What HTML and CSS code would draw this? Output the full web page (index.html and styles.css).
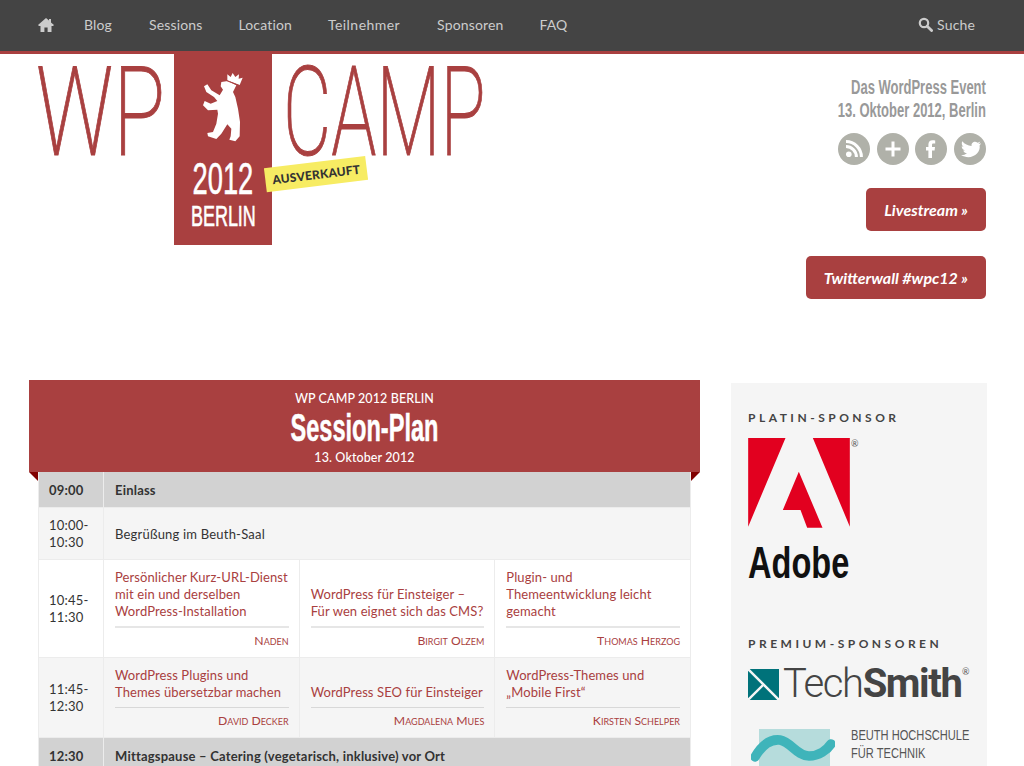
FILE: index.html
```html
<!DOCTYPE html>
<html>
<head>
    <title>WP Camp 2012 Berlin</title>
    <meta charset="UTF-8">
    <link rel="stylesheet" href="styles.css">
</head>
<body>
    <nav class="topnav">
        <a class="home" href="#"><svg width="16" height="14" viewBox="0 0 16 14"><path d="M8 0 L11 2.6 V1 H13 V4.4 L16 7 L15 8 H13.5 V14 H9.6 V9.5 H6.4 V14 H2.5 V8 H1 L0 7 Z" fill="#ccc"/></svg></a>
        <a class="nav-blog" href="#">Blog</a>
        <a href="#">Sessions</a>
        <a href="#">Location</a>
        <a class="nav-wide" href="#">Teilnehmer</a>
        <a href="#">Sponsoren</a>
        <a href="#">FAQ</a>
        <a class="search" href="#"><svg width="15" height="15" viewBox="0 0 15 15"><circle cx="6" cy="6" r="4.2" fill="none" stroke="#ccc" stroke-width="2.2"/><path d="M9.2 9.2 L13.6 13.6" stroke="#ccc" stroke-width="2.8" stroke-linecap="round"/></svg>Suche</a>
    </nav>

    <header class="masthead">
        <div class="logo">
            <span class="logo-word logo-wp"><span>WP</span></span>
            <div class="banner">
                <svg class="bear" width="40" height="70" viewBox="95 65 120 210">
                    <path d="M150 95 L170 92 L195 105 L185 125 L192 140 L200 175 L206 215 L205 258 L192 273 L174 268 L178 258 L180 235 L168 222 L150 250 L135 266 L110 258 L108 248 L125 245 L135 220 L140 190 L138 178 L110 180 L95 165 L100 152 L118 160 L138 152 L128 140 L105 125 L98 108 L108 102 L120 120 L145 135 L155 118 L148 108 Z" fill="#fff"/>
                    <path d="M168 90 L168 72 L178 80 L184 68 L192 80 L203 72 L202 85 L214 82 L205 104 Z" fill="#fff"/>
                    <path d="M166 91 L204 106" stroke="#a94040" stroke-width="3"/>
                </svg>
                <div class="banner-year"><span>2012</span></div>
                <div class="banner-city"><span>BERLIN</span></div>
            </div>
            <span class="logo-word logo-camp"><span>CAMP</span></span>
            <span class="soldout">AUSVERKAUFT</span>
        </div>
        <div class="event">
            <p class="tagline"><span>Das WordPress Event</span><span>13. Oktober 2012, Berlin</span></p>
            <div class="social">
                <a href="#"><svg width="32" height="32" viewBox="0 0 32 32"><circle cx="16" cy="16" r="16" fill="#b0b1a9"/><circle cx="10.8" cy="21.2" r="2.8" fill="#fff"/><path d="M8 13.6 A10.4 10.4 0 0 1 18.4 24 M8 8.6 A15.4 15.4 0 0 1 23.4 24" fill="none" stroke="#fff" stroke-width="3"/></svg></a>
                <a href="#"><svg width="32" height="32" viewBox="0 0 32 32"><circle cx="16" cy="16" r="16" fill="#b0b1a9"/><path d="M16 8.5 V23.5 M8.5 16 H23.5" stroke="#fff" stroke-width="3"/></svg></a>
                <a href="#"><svg width="32" height="32" viewBox="0 0 32 32"><circle cx="16" cy="16" r="16" fill="#b0b1a9"/><path d="M13.4 25 V17.4 H11 V14 H13.4 V11.6 C13.4 8.6 15 7.2 17.6 7.2 C18.8 7.2 19.8 7.3 20.2 7.4 V10.4 H18.4 C17.2 10.4 17 11 17 11.9 V14 H20 L19.6 17.4 H17 V25 Z" fill="#fff"/></svg></a>
                <a href="#"><svg width="32" height="32" viewBox="0 0 32 32"><circle cx="16" cy="16" r="16" fill="#b0b1a9"/><path d="M27 10.2 C26.1 10.7 25.3 10.9 24.4 11 C25.3 10.4 26 9.6 26.3 8.6 C25.5 9.1 24.5 9.5 23.5 9.7 C21.1 7.3 16.9 9.3 17.6 12.9 C14 12.7 10.6 11 8.3 8.2 C7.2 10.2 7.8 12.6 9.6 13.8 C8.9 13.8 8.3 13.6 7.7 13.3 C7.7 15.3 9.1 17 11 17.4 C10.4 17.6 9.8 17.6 9.2 17.5 C9.7 19.1 11.2 20.3 13 20.3 C11.2 21.7 9 22.3 6.8 22.1 C17.5 28 27 20 25.6 12.5 C26.1 11.7 26.6 11 27 10.2 Z" fill="#fff"/></svg></a>
            </div>
            <a class="btn btn-live" href="#">Livestream »</a>
            <a class="btn btn-wall" href="#">Twitterwall #wpc12 »</a>
        </div>
    </header>

    <div class="content">
        <main class="schedule">
            <div class="ribbon">
                <div class="ribbon-over">WP CAMP 2012 BERLIN</div>
                <h1><span>Session-Plan</span></h1>
                <div class="ribbon-date">13. Oktober 2012</div>
            </div>
            <table>
                <tr class="break">
                    <td class="time">09:00</td>
                    <td class="note" colspan="3">Einlass</td>
                </tr>
                <tr class="alt">
                    <td class="time">10:00-<br>10:30</td>
                    <td class="note" colspan="3">Begrüßung im Beuth-Saal</td>
                </tr>
                <tr>
                    <td class="time">10:45-<br>11:30</td>
                    <td><a class="talk" href="#">Persönlicher Kurz-URL-Dienst<br>mit ein und derselben<br>WordPress-Installation</a><div class="speaker">Naden</div></td>
                    <td><a class="talk" href="#">WordPress für Einsteiger –<br>Für wen eignet sich das CMS?</a><div class="speaker">Birgit Olzem</div></td>
                    <td><a class="talk" href="#">Plugin- und<br>Themeentwicklung leicht<br>gemacht</a><div class="speaker">Thomas Herzog</div></td>
                </tr>
                <tr class="alt">
                    <td class="time">11:45-<br>12:30</td>
                    <td><a class="talk" href="#">WordPress Plugins und<br>Themes übersetzbar machen</a><div class="speaker">David Decker</div></td>
                    <td><a class="talk" href="#">WordPress SEO für Einsteiger</a><div class="speaker">Magdalena Mues</div></td>
                    <td><a class="talk" href="#">WordPress-Themes und<br>„Mobile First“</a><div class="speaker">Kirsten Schelper</div></td>
                </tr>
                <tr class="break">
                    <td class="time">12:30</td>
                    <td class="note" colspan="3">Mittagspause – Catering (vegetarisch, inklusive) vor Ort</td>
                </tr>
            </table>
        </main>

        <aside class="sponsors">
            <h2>Platin-Sponsor</h2>
            <div class="adobe">
                <svg width="102" height="90" viewBox="68 176 305 270">
                    <path d="M68 176 H180 L68 442 Z M262 176 H373 V442 Z M220 277 L291 445 H245 L225 392 H172 Z" fill="#e2001f"/>
                </svg>
                <span class="reg">®</span>
                <div class="adobe-name"><span>Adobe</span></div>
            </div>
            <h2 class="premium">Premium-Sponsoren</h2>
            <div class="techsmith">
                <svg width="31" height="31" viewBox="0 0 31 31">
                    <rect width="31" height="31" fill="#00727a"/>
                    <path d="M0 0 L31 31 M0 31 L15.5 15.5" stroke="#f5f5f5" stroke-width="2.4"/>
                </svg>
                <span class="ts-name">Tech<b>Smith</b></span>
                <span class="ts-reg">®</span>
            </div>
            <div class="beuth">
                <div class="beuth-mark">
                    <svg width="84" height="40" viewBox="0 0 84 40">
                        <rect x="8" y="0" width="71" height="40" fill="#b6dcdc"/>
                        <path d="M4 28 C12 14 20 10 29 11 C40 13 46 27 58 27 C68 27 76 21 80 15" fill="none" stroke="#3fb4ba" stroke-width="9.5" stroke-linecap="round"/>
                    </svg>
                </div>
                <div class="beuth-name"><span>BEUTH HOCHSCHULE</span><span>FÜR TECHNIK</span></div>
            </div>
        </aside>
    </div>
</body>
</html>
```

FILE: styles.css
```css
html, body {
    margin: 0;
    padding: 0;
}
body {
    height: 766px;
    overflow: hidden;
    background: #fff;
    font-family: Lato, "Open Sans", sans-serif;
    font-size: 13px;
    line-height: 17px;
    letter-spacing: 0.2px;
    color: #333;
}
a {
    text-decoration: none;
}

.topnav {
    display: flex;
    align-items: center;
    height: 54px;
    box-sizing: border-box;
    padding: 0 37px 2px 38px;
    background: #444;
    border-bottom: 3px solid #a94040;
}
.topnav a {
    margin-right: 36px;
    color: #ccc;
    font-size: 14px;
    letter-spacing: 0.15px;
}
.topnav .home {
    display: flex;
    margin-right: 30px;
}
.topnav .nav-blog {
    margin-right: 37px;
}
.topnav .nav-wide {
    margin-right: 37px;
    letter-spacing: 0.45px;
}
.topnav .search {
    display: flex;
    align-items: center;
    gap: 4px;
    margin: 0 0 0 auto;
    padding-right: 12px;
}

.masthead {
    display: flex;
    justify-content: space-between;
    height: 326px;
    padding: 0 38px 0 38px;
}
.logo {
    position: relative;
    display: flex;
    align-items: flex-start;
    height: 191px;
}
.logo-word {
    display: block;
    height: 124px;
    margin-top: -3px;
    color: #a94040;
    font-family: Roboto, sans-serif;
    font-weight: 200;
    font-size: 124px;
    line-height: 124px;
    letter-spacing: 0;
    white-space: nowrap;
    -webkit-text-stroke: 1px #a94040;
}
.logo-word span {
    display: block;
    transform-origin: 0 50%;
}
.logo-wp {
    width: 136px;
}
.logo-wp span {
    transform: translateX(-2px) scaleX(0.69);
}
.logo-camp {
    width: 200px;
    margin-left: 15px;
}
.logo-camp span {
    transform: translateX(-4px) scaleX(0.6);
}
.banner {
    display: flex;
    flex-direction: column;
    align-items: center;
    width: 98px;
    height: 191px;
    background: #a94040;
    color: #fff;
    font-family: "Liberation Sans", sans-serif;
    letter-spacing: 0;
    -webkit-text-stroke: 0.6px #fff;
}
.banner span {
    display: block;
    transform: scaleX(0.62);
}
.bear {
    flex: none;
    margin-top: 18px;
}
.banner-year {
    margin-top: 15px;
    font-size: 44px;
    line-height: 44px;
}
.banner-city {
    margin-top: 0;
    font-size: 29px;
    line-height: 30px;
}
.soldout {
    position: absolute;
    left: 227px;
    top: 108px;
    padding: 5px 7px 4px;
    background: #f7ec63;
    color: #333;
    font-weight: 900;
    font-size: 12px;
    line-height: 15px;
    letter-spacing: 0.2px;
    transform: rotate(-7deg);
}

.event {
    display: flex;
    flex-direction: column;
    align-items: flex-end;
}
.tagline {
    margin: 22px 0 0;
    color: #999;
    font-family: "Liberation Sans", sans-serif;
    font-weight: bold;
    font-size: 20px;
    line-height: 23px;
    letter-spacing: 0;
    text-align: right;
}
.tagline span {
    display: block;
    transform: scaleX(0.65);
    transform-origin: 100% 50%;
}
.social {
    display: flex;
    gap: 6.67px;
    margin-top: 11px;
}
.social a {
    display: block;
    height: 32px;
}
.btn {
    display: block;
    height: 43px;
    box-sizing: border-box;
    padding: 12px 18px;
    border-radius: 5px;
    background: #a94040;
    color: #fff;
    font-style: italic;
    font-weight: bold;
    font-size: 16px;
    line-height: 19px;
    letter-spacing: 0;
}
.btn-live {
    margin-top: 23px;
}
.btn-wall {
    margin-top: 25px;
}

.content {
    display: flex;
    align-items: flex-start;
    gap: 31px;
    padding-left: 29px;
}
.schedule {
    width: 671px;
}
.ribbon {
    position: relative;
    height: 92px;
    box-sizing: border-box;
    padding-top: 10px;
    background: #a94040;
    color: #fff;
    text-align: center;
}
.ribbon::before,
.ribbon::after {
    content: "";
    position: absolute;
    top: 92px;
    border-top: 9px solid #800000;
}
.ribbon::before {
    left: 0;
    border-left: 9px solid transparent;
}
.ribbon::after {
    right: 0;
    border-right: 9px solid transparent;
}
.ribbon-over,
.ribbon-date {
    font-size: 12.5px;
    font-weight: 500;
    line-height: 17px;
    letter-spacing: 0.1px;
}
.ribbon h1 {
    margin: 3px 0 0;
    font-family: "Liberation Sans", sans-serif;
    font-weight: bold;
    font-size: 38px;
    line-height: 36px;
    letter-spacing: 0;
}
.ribbon h1 span {
    display: block;
    transform: scaleX(0.62);
    -webkit-text-stroke: 0.5px #fff;
}
.ribbon-date {
    margin-top: 3px;
}

table {
    width: 653px;
    margin-left: 9px;
    table-layout: fixed;
    border-collapse: collapse;
}
td {
    padding: 9px 10px 8px 11px;
    border: 1px solid #ececec;
    vertical-align: bottom;
}
td.time {
    width: 44px;
    padding-left: 10px;
    vertical-align: middle;
}
td.note {
    vertical-align: middle;
}
tr.alt td {
    background: #f5f5f5;
}
tr.break td {
    padding-top: 10px;
    background: #d2d2d2;
    font-weight: bold;
    border-top: 0;
}
.talk {
    display: block;
    padding-bottom: 6px;
    border-bottom: 2px solid #e6e6e6;
    color: #a94040;
    letter-spacing: 0.1px;
    white-space: nowrap;
}
tr.alt .talk {
    border-bottom: 1px solid #d8d8d8;
}
.speaker {
    padding-top: 4px;
    color: #a94040;
    font-size: 12.2px;
    letter-spacing: 0;
    font-variant: small-caps;
    text-align: right;
}

.sponsors {
    width: 256px;
    height: 383px;
    box-sizing: border-box;
    margin-top: 3px;
    padding: 27px 17px 0;
    background: #f5f5f5;
}
.sponsors h2 {
    margin: 0;
    color: #444;
    font-size: 12px;
    font-weight: bold;
    line-height: 16px;
    letter-spacing: 3.5px;
    text-transform: uppercase;
}
.adobe {
    position: relative;
    margin-top: 12px;
}
.adobe svg {
    display: block;
}
.reg {
    position: absolute;
    left: 103px;
    top: -3px;
    font-size: 9px;
    color: #555;
}
.adobe-name {
    margin-top: 11px;
    color: #111;
    font-family: "Liberation Sans", sans-serif;
    font-weight: bold;
    font-size: 44px;
    line-height: 48px;
    letter-spacing: 0;
}
.adobe-name span {
    display: block;
    transform: scaleX(0.74);
    transform-origin: 0 50%;
}
.sponsors .premium {
    margin-top: 49px;
}
.techsmith {
    position: relative;
    display: flex;
    align-items: center;
    gap: 4px;
    margin-top: 14px;
}
.techsmith svg {
    display: block;
    flex: none;
}
.ts-name {
    color: #444;
    font-family: Roboto, sans-serif;
    font-weight: 300;
    font-size: 40px;
    line-height: 36px;
    letter-spacing: -1.4px;
    white-space: nowrap;
}
.ts-name b {
    font-weight: 700;
}
.ts-reg {
    position: absolute;
    left: 214px;
    top: -3px;
    font-size: 9px;
    color: #555;
}
.beuth {
    display: flex;
    gap: 16px;
    margin-top: 27px;
    margin-left: 3px;
}
.beuth-mark {
    height: 40px;
}
.beuth-name {
    margin-top: -3px;
    color: #555;
    font-family: "Liberation Sans", sans-serif;
    font-size: 15px;
    line-height: 18px;
    letter-spacing: 0;
    white-space: nowrap;
}
.beuth-name span {
    display: block;
    transform: scaleX(0.74);
    transform-origin: 0 50%;
}
```
